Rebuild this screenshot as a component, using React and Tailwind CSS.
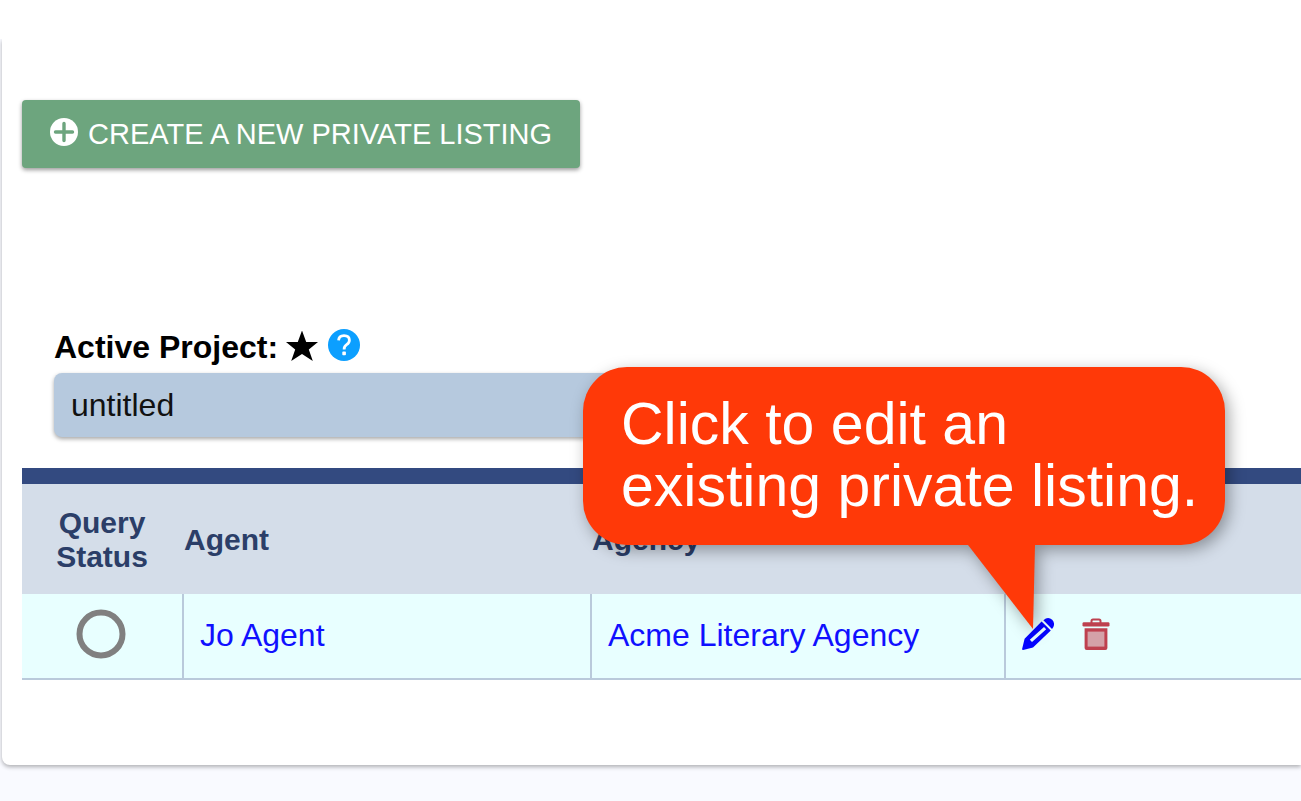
import { useState } from "react";

const listings = [{ id: 1, agent: "Jo Agent", agency: "Acme Literary Agency" }];

function PlusCircleIcon() {
  return (
    <svg viewBox="0 0 28 28" className="size-7" aria-hidden="true">
      <circle cx="14" cy="14" r="14" fill="currentColor" />
      <path d="M14 5.5 V22.5 M5.5 14 H22.5" stroke="#6da57e" strokeWidth="3.4" strokeLinecap="round" />
    </svg>
  );
}

function StarIcon() {
  return (
    <svg viewBox="0 0 32 32" className="w-8 h-8" aria-hidden="true">
      <path d="M16 -0.5 L20.2 11 H32 L22.8 18.4 L26.8 30 L16 23 L5.2 30 L9.2 18.4 L0 11 H11.8 Z" fill="currentColor" />
    </svg>
  );
}

function HelpIcon() {
  return (
    <svg viewBox="0 0 32 32" className="w-8 h-8" aria-hidden="true">
      <circle cx="16" cy="16" r="16" fill="currentColor" />
      <path
        d="M10.6 11.4 Q10.8 6.6 16 6.6 Q21.4 6.6 21.4 11.2 Q21.4 13.8 18.6 15.6 Q16.1 17.2 16.1 20.4"
        fill="none"
        stroke="white"
        strokeWidth="2.8"
      />
      <rect x="14.3" y="22.6" width="3.6" height="3.6" rx="0.8" fill="white" />
    </svg>
  );
}

function PencilIcon() {
  return (
    <svg viewBox="0 0 32 32" className="w-8 h-8" aria-hidden="true">
      <path
        fill="currentColor"
        fillRule="evenodd"
        d="M19.6 3.4 L28.8 12.6 L11 29.4 L1 32 Q0 32 0.1 31 L2.6 20.8 Z M7.8 21.8 L10 24 L24.2 11.2 L22 9 Z"
      />
      <path fill="currentColor" d="M21.4 2.2 Q26 -1.8 30.2 1.8 Q34 6.2 30 11 Z" />
    </svg>
  );
}

function TrashIcon() {
  return (
    <svg viewBox="0 0 28 32" className="w-7 h-8" aria-hidden="true">
      <path d="M9.5 5 V3 Q9.5 1.4 11 1.4 H17 Q18.5 1.4 18.5 3 V5" fill="none" stroke="#be414f" strokeWidth="2" />
      <rect x="0.5" y="4.2" width="27" height="4.4" rx="1.4" fill="#be414f" />
      <path d="M2.6 10.2 H25.4 V30 Q25.4 32 23.4 32 H4.6 Q2.6 32 2.6 30 Z" fill="#be414f" />
      <rect x="5.6" y="13.6" width="16.8" height="15" fill="#d4a1a8" />
    </svg>
  );
}

function Callout() {
  return (
    <div className="absolute left-[561px] -top-[101px] w-[642px] drop-shadow-[4px_5px_8px_rgba(0,0,0,0.35)]">
      <p className="h-[178px] rounded-[44px] bg-[#ff3908] pt-[26px] pl-[38px] text-[59px] leading-[62px] text-white">
        Click to edit an
        <br />
        existing private listing.
      </p>
      <svg viewBox="0 0 68 86" className="absolute left-[385px] top-[176px] w-[68px] h-[86px]" aria-hidden="true">
        <path d="M0 0 H67 V2 L65 86 L0 2 Z" fill="#ff3908" />
      </svg>
    </div>
  );
}

export default function App() {
  const [project, setProject] = useState("untitled");

  return (
    <div className="min-h-screen overflow-x-hidden bg-white pt-[39px] font-['Liberation_Sans',Arial,sans-serif] flex flex-col">
      <main className="flex-1 overflow-hidden bg-[#f9faff] pl-[2px]">
        <div className="rounded-bl-lg bg-white pt-[61px] pb-[85px] pl-5 shadow-[0_2px_4px_rgba(0,0,0,0.3)]">
          <button
            type="button"
            className="flex h-[68px] items-center gap-2.5 rounded-[4px] bg-[#6da57e] px-7 pt-0.5 text-[29px] text-white shadow-[0_2px_4px_rgba(0,0,0,0.4)]"
          >
            <span className="pb-1.5">
              <PlusCircleIcon />
            </span>
            CREATE A NEW PRIVATE LISTING
          </button>

          <div className="ml-8 mt-[159px] flex items-center gap-2.5 text-black">
            <label htmlFor="project" className="flex items-center gap-2 text-[32px] leading-[40px] font-bold">
              Active Project:
              <StarIcon />
            </label>
            <a href="#help" aria-label="Help" className="pb-1 text-[#0c9fff]">
              <HelpIcon />
            </a>
          </div>
          <select
            id="project"
            value={project}
            onChange={(e) => setProject(e.target.value)}
            className="ml-8 mt-[6px] block h-16 w-1/2 appearance-none rounded-lg bg-[#b6c9de] px-[17px] text-[32px] text-[#111111] shadow-[0_2px_4px_rgba(0,0,0,0.35)]"
          >
            <option value="untitled">untitled</option>
          </select>

          <div className="relative mt-[31px]">
            <table className="w-full table-fixed border-separate border-spacing-0 border-t-[16px] border-[#334a80]">
              <thead>
                <tr className="h-[110px] bg-[#d4dde9] text-left text-[30px] leading-[34px] text-[#2b3e68]">
                  <th className="w-[160px] px-6 pt-0.5 text-center">Query Status</th>
                  <th className="w-[408px] pl-0.5 pt-0.5">Agent</th>
                  <th className="w-[414px] pl-0.5 pt-0.5">Agency</th>
                  <th aria-label="Actions"></th>
                </tr>
              </thead>
              <tbody>
                {listings.map((item) => (
                  <tr key={item.id} className="h-[86px] bg-[#e8ffff] text-[32px] text-[#1010ff]">
                    <td className="border-b-2 border-[#b9cadb] pb-1 pr-0.5">
                      <svg viewBox="0 0 50 50" className="mx-auto size-[50px]" role="img" aria-label="Not queried">
                        <circle cx="25" cy="25" r="21.5" fill="none" stroke="#808080" strokeWidth="6" />
                      </svg>
                    </td>
                    <td className="border-b-2 border-l-2 border-[#b9cadb] pb-0.5 pl-4">
                      <a href="#agent">{item.agent}</a>
                    </td>
                    <td className="border-b-2 border-l-2 border-[#b9cadb] pb-0.5 pl-4">
                      <a href="#agency">{item.agency}</a>
                    </td>
                    <td className="border-b-2 border-l-2 border-[#b9cadb] pb-1 pl-4">
                      <div className="flex gap-7">
                        <button type="button" aria-label="Edit" className="text-[#0505ff]">
                          <PencilIcon />
                        </button>
                        <button type="button" aria-label="Delete">
                          <TrashIcon />
                        </button>
                      </div>
                    </td>
                  </tr>
                ))}
              </tbody>
            </table>
            <Callout />
          </div>
        </div>
      </main>
    </div>
  );
}
